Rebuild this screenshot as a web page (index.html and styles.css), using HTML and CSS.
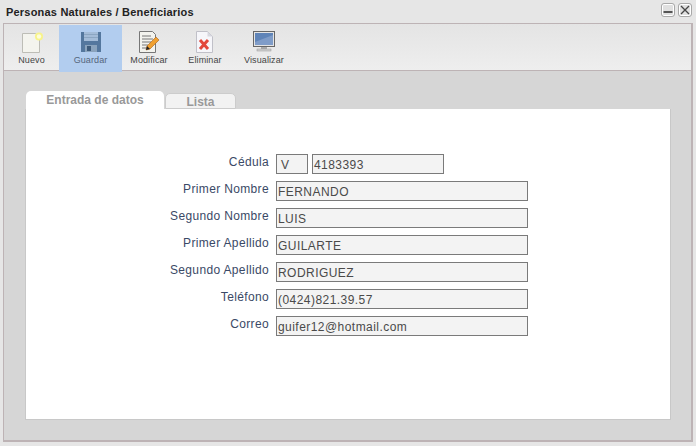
FILE: index.html
```html
<!DOCTYPE html>
<html>
<head>
    <title>Personas Naturales / Beneficiarios</title>
    <link rel="stylesheet" href="styles.css">
</head>
<body>
    <div id="titlebar">
        <span class="title">Personas Naturales / Beneficiarios</span>
        <span class="winbtn"><svg width="12" height="12" viewBox="0 0 12 12"><rect x="1.500" y="7" width="9" height="2" fill="#555"/></svg></span>
        <span class="winbtn"><svg width="12" height="12" viewBox="0 0 12 12"><path d="M2 2l8 8M10 2l-8 8" stroke="#444" stroke-width="1.300" fill="none"/></svg></span>
    </div>
    <div id="panel">
        <div id="toolbar">
            <div class="tool nuevo">
                <svg width="22" height="22" viewBox="0 0 22 22">
                    <path d="M1.500 2.500h13l4 4v15h-17z" fill="#f4f4ee" stroke="#bdbdb6"/>
                    <circle cx="18" cy="5.500" r="4" fill="#f7f38a"/>
                    <circle cx="18" cy="5.500" r="2.200" fill="#fdfdd8"/>
                </svg>
                <span>Nuevo</span>
            </div>
            <div class="tool active">
                <svg width="22" height="22" viewBox="0 0 22 22">
                    <path d="M1 1h20v20H1z" fill="#54779e"/>
                    <rect x="4" y="1" width="14" height="9" fill="#a4bcd8"/>
                    <path d="M4 3.500h14M4 6.500h14" stroke="#8ca6c2"/>
                    <rect x="5" y="14" width="12" height="7" fill="#8aa3bd"/>
                    <rect x="7" y="15" width="4" height="5" fill="#3f5c7c"/>
                </svg>
                <span>Guardar</span>
            </div>
            <div class="tool modificar">
                <svg width="22" height="22" viewBox="0 0 22 22">
                    <path d="M1.500 .5h13l3 3v18h-16z" fill="#f3f3ee" stroke="#777"/>
                    <path d="M4 5h9M4 8h11M4 11h9M4 14h6M4 17h5" stroke="#777"/>
                    <path d="M8 19l1-4 9-9 3 3-9 9z" fill="#f0a030" stroke="#a8601a" stroke-width=".6"/>
                    <path d="M8 19l1-4 3 3z" fill="#222"/>
                </svg>
                <span>Modificar</span>
            </div>
            <div class="tool eliminar">
                <svg width="22" height="22" viewBox="0 0 22 22">
                    <path d="M2.500 .5h11l5 5v16h-16z" fill="#f6f6fa" stroke="#c0c0c8"/>
                    <path d="M13.500 .5v5h5z" fill="#d8d8e0"/>
                    <path d="M6 9l8 9M14 9l-8 9" stroke="#e2483c" stroke-width="3"/>
                </svg>
                <span>Eliminar</span>
            </div>
            <div class="tool visualizar">
                <svg width="22" height="22" viewBox="0 0 22 22">
                    <rect x=".5" y=".5" width="21" height="15" fill="#e4e4e4" stroke="#666"/>
                    <rect x="2" y="2" width="18" height="12" fill="#5f84b8"/>
                    <path d="M2 11l18-7v10H2z" fill="#7f9cc8"/>
                    <rect x="8" y="16" width="6" height="2" fill="#aaa"/>
                    <rect x="4" y="18" width="14" height="2" fill="#d0d0d0" stroke="#999" stroke-width=".5"/>
                </svg>
                <span>Visualizar</span>
            </div>
        </div>
        <div id="content">
            <div id="tabs">
                <div class="tab selected">Entrada de datos</div>
                <div class="tab">Lista</div>
            </div>
            <div id="tabbody">
                <div class="row">
                    <label>Cédula</label>
                    <div class="field short">V</div>
                    <div class="field number">4183393</div>
                </div>
                <div class="row">
                    <label>Primer Nombre</label>
                    <div class="field">FERNANDO</div>
                </div>
                <div class="row">
                    <label>Segundo Nombre</label>
                    <div class="field">LUIS</div>
                </div>
                <div class="row">
                    <label>Primer Apellido</label>
                    <div class="field">GUILARTE</div>
                </div>
                <div class="row">
                    <label>Segundo Apellido</label>
                    <div class="field">RODRIGUEZ</div>
                </div>
                <div class="row">
                    <label>Teléfono</label>
                    <div class="field">(0424)821.39.57</div>
                </div>
                <div class="row">
                    <label>Correo</label>
                    <div class="field">guifer12@hotmail.com</div>
                </div>
            </div>
        </div>
    </div>
</body>
</html>
```

FILE: styles.css
```css
html, body {
    margin: 0;
    height: 446px;
    overflow: hidden;
}
body {
    background-color: #e6e6e6;
    font-family: "Liberation Sans", Arial, sans-serif;
    padding: 0 3px;
    box-sizing: border-box;
}
#titlebar {
    height: 23px;
    display: flex;
    align-items: center;
    gap: 3px;
    padding-right: 1px;
}
.title {
    font-size: 11px;
    font-weight: bold;
    color: #222;
    margin-left: 3px;
    margin-right: auto;
    letter-spacing: 0.2px;
}
.winbtn {
    width: 14px;
    height: 14px;
    margin-bottom: 3px;
    box-sizing: border-box;
    border: 1px solid #a8a8a8;
    border-radius: 3px;
    background-color: #e0e0e0;
    box-shadow: inset 0 0 0 1px #fff;
    display: flex;
    align-items: center;
    justify-content: center;
    overflow: hidden;
}
#panel {
    height: 419px;
    border: 1px solid #bdb3b5;
    border-width: 1px 2px 2px 1px;
    box-sizing: border-box;
    background-color: #d6d6d6;
}
#toolbar {
    height: 46px;
    display: flex;
    background: linear-gradient(#e4e4e4, #eeeeee);
    border-bottom: 1px solid #bdb3b5;
}
.tool {
    width: 63px;
    height: 47px;
    margin-top: 1px;
    display: flex;
    flex-direction: column;
    align-items: center;
    padding-top: 6px;
    box-sizing: border-box;
    font-size: 9px;
    color: #444;
    letter-spacing: 0.1px;
}
.tool.nuevo {
    width: 55px;
}
.tool.modificar {
    width: 54px;
}
.tool.eliminar {
    width: 58px;
}
.tool.visualizar {
    width: 60px;
}
.tool span {
    margin-top: 2px;
}
.tool.active {
    background-color: #b2cdef;
    color: #55667c;
}
#content {
    padding: 20px 20px 0 21px;
}
#tabs {
    display: flex;
    height: 18px;
    align-items: flex-end;
}
.tab {
    font-size: 12px;
    font-weight: bold;
    color: #999;
    text-align: center;
    box-sizing: border-box;
    border-radius: 5px 5px 0 0;
}
.tab.selected {
    width: 138px;
    height: 18px;
    margin-left: 1px;
    background-color: #fff;
    line-height: 18px;
}
.tab:not(.selected) {
    width: 71px;
    height: 16px;
    margin-left: 1px;
    background-color: #f2f2f2;
    border: 1px solid #ccc;
    line-height: 16px;
}
#tabbody {
    height: 311px;
    box-sizing: border-box;
    background-color: #fff;
    border: 1px solid #c8c8c8;
    border-top: 0;
    padding-top: 45px;
}
.row {
    display: flex;
    height: 27px;
    gap: 4px;
}
.row label {
    width: 243px;
    margin-right: 3px;
    text-align: right;
    font-size: 12px;
    line-height: 16px;
    color: #3a4966;
    letter-spacing: 0.35px;
}
.field {
    width: 252px;
    height: 20px;
    box-sizing: border-box;
    border: 1px solid #7a7a7a;
    background-color: #f3f3f3;
    font-size: 12px;
    line-height: 20px;
    padding-left: 1px;
    color: #4a4a4a;
    letter-spacing: 0.45px;
}
.field.short {
    width: 32px;
    padding-left: 4px;
}
.field.number {
    width: 132px;
}
```
